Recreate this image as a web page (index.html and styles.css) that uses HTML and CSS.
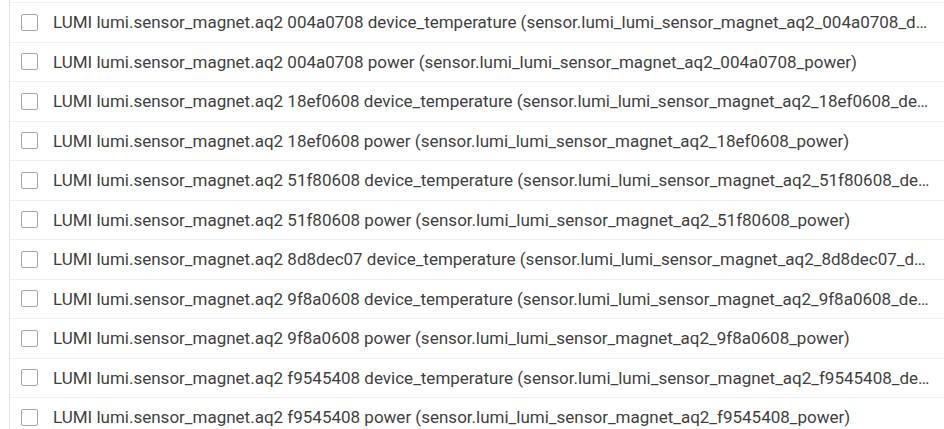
FILE: index.html
```html
<!DOCTYPE html>
<html>
<head>
<meta charset="utf-8">
<link rel="stylesheet" href="styles.css">
</head>
<body>
<div class="list">
  <label class="row"><span class="box"></span><span class="label">LUMI lumi.sensor_magnet.aq2 004a0708 device_temperature (sensor.lumi_lumi_sensor_magnet_aq2_004a0708_device_temperature)</span></label>
  <label class="row"><span class="box"></span><span class="label">LUMI lumi.sensor_magnet.aq2 004a0708 power (sensor.lumi_lumi_sensor_magnet_aq2_004a0708_power)</span></label>
  <label class="row"><span class="box"></span><span class="label">LUMI lumi.sensor_magnet.aq2 18ef0608 device_temperature (sensor.lumi_lumi_sensor_magnet_aq2_18ef0608_device_temperature)</span></label>
  <label class="row"><span class="box"></span><span class="label">LUMI lumi.sensor_magnet.aq2 18ef0608 power (sensor.lumi_lumi_sensor_magnet_aq2_18ef0608_power)</span></label>
  <label class="row"><span class="box"></span><span class="label">LUMI lumi.sensor_magnet.aq2 51f80608 device_temperature (sensor.lumi_lumi_sensor_magnet_aq2_51f80608_device_temperature)</span></label>
  <label class="row"><span class="box"></span><span class="label">LUMI lumi.sensor_magnet.aq2 51f80608 power (sensor.lumi_lumi_sensor_magnet_aq2_51f80608_power)</span></label>
  <label class="row"><span class="box"></span><span class="label">LUMI lumi.sensor_magnet.aq2 8d8dec07 device_temperature (sensor.lumi_lumi_sensor_magnet_aq2_8d8dec07_device_temperature)</span></label>
  <label class="row"><span class="box"></span><span class="label">LUMI lumi.sensor_magnet.aq2 9f8a0608 device_temperature (sensor.lumi_lumi_sensor_magnet_aq2_9f8a0608_device_temperature)</span></label>
  <label class="row"><span class="box"></span><span class="label">LUMI lumi.sensor_magnet.aq2 9f8a0608 power (sensor.lumi_lumi_sensor_magnet_aq2_9f8a0608_power)</span></label>
  <label class="row"><span class="box"></span><span class="label">LUMI lumi.sensor_magnet.aq2 f9545408 device_temperature (sensor.lumi_lumi_sensor_magnet_aq2_f9545408_device_temperature)</span></label>
  <label class="row"><span class="box"></span><span class="label">LUMI lumi.sensor_magnet.aq2 f9545408 power (sensor.lumi_lumi_sensor_magnet_aq2_f9545408_power)</span></label>
</div>
</body>
</html>
```
FILE: styles.css
```css
html, body {
  margin: 0;
  padding: 0;
  background: #ffffff;
  overflow: hidden;
}
body {
  font-family: Roboto, "Noto Sans", sans-serif;
}
.list {
  margin-left: 9px;
  padding-top: 2px;
  border-left: 1px solid #e3e3e3;
  width: 935px;
}
.row {
  display: flex;
  align-items: center;
  height: 39.5px;
  box-sizing: border-box;
  border-top: 1px solid #f0f0f0;
  padding-left: 11px;
}
.box {
  flex: none;
  width: 15px;
  height: 15px;
  border: 1px solid #a6a6a6;
  border-radius: 2px;
  box-sizing: content-box;
  background: #fff;
}
.label {
  margin-left: 15px;
  font-size: 17px;
  color: #3f3f3f;
  white-space: nowrap;
  overflow: hidden;
  text-overflow: ellipsis;
  min-width: 0;
  padding-right: 11px;
}
```
